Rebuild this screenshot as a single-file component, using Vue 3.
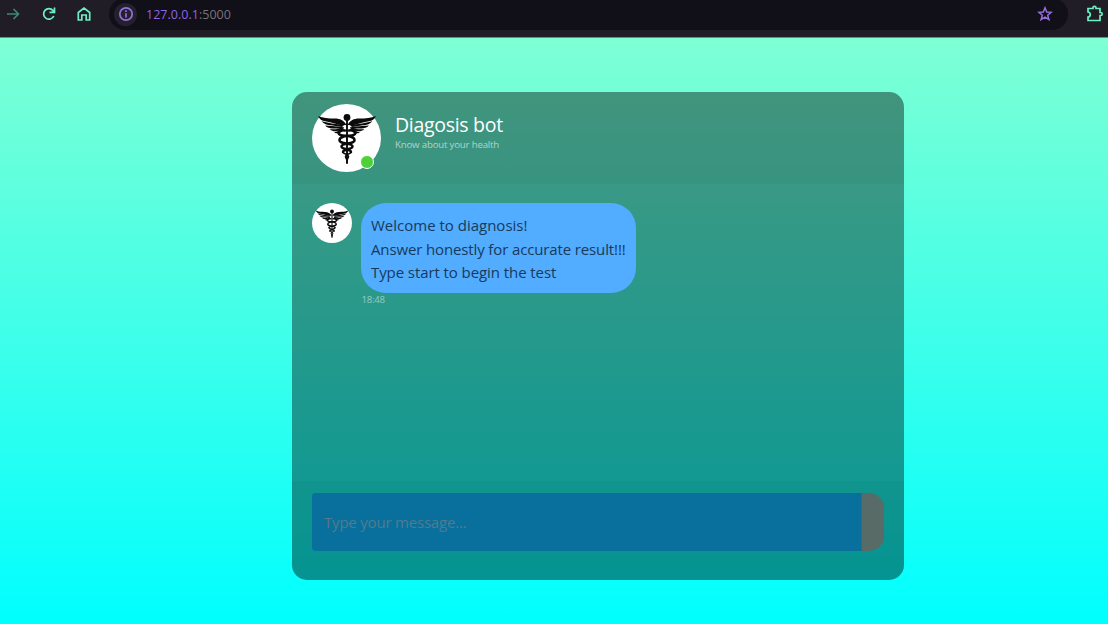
<script setup>
const lines = [
  { text: 'Welcome to diagnosis!', tone: 'plain' },
  { text: 'Answer honestly for accurate result!!!', tone: 'tight' },
  { text: 'Type start to begin the test', tone: 'snug' },
]
</script>

<template>
  <svg class="defs" width="0" height="0" aria-hidden="true">
    <symbol id="caduceus" viewBox="0 0 60 60">
      <g id="wing" fill="#0b0b0b">
        <path d="M29.500 17C27 12.500 23 10.500 18 10.500C11 10.500 6 10 1 8C2.500 11 4.500 12.400 7 13.100L14 14.500L24 17.300Z" />
        <path d="M4.500 13.300C7 16.200 10 17.200 14 17.300L25 19L27 17L15 15.400Z" />
        <path d="M8 17.500C11 20.300 14 20.800 17 20.400L25 20.600L26 19L15 18Z" />
        <path d="M12.500 21.300C15.500 23.600 18 23.600 20 23.100L26 22L27 19L19 21.200Z" />
        <path d="M17 24.400C20 26 23 25.600 26.500 22.800L26 21.500Z" />
      </g>
      <use href="#wing" transform="translate(60 0) scale(-1 1)" />
      <circle cx="30" cy="9.500" r="3.400" fill="#0b0b0b" />
      <path d="M30 12V53" stroke="#0b0b0b" stroke-width="1.900" />
      <g fill="none" stroke="#0b0b0b" stroke-linecap="round">
        <path d="M28 22.500C20.500 21.500 19.500 26.500 25 27.500C31 28 38 28.500 37.500 32.500C37 36.500 24.500 34.500 24.500 38.500C24.500 41.500 34 41 34 44" stroke-width="2.500" />
        <path d="M32 22.500C39.500 21.500 40.500 26.500 35 27.500C29 28 22 28.500 22.500 32.500C23 36.500 35.500 34.500 35.500 38.500C35.500 41.500 26 41 26 44" stroke-width="2.500" />
        <path d="M34 44C34 46 28.500 46 28.500 48.500C28.500 50.500 31 51 30.300 55M26 44C26 46 31.500 46 31.500 48.500C31.500 50.500 29 51 29.700 55" stroke-width="1.600" />
      </g>
    </symbol>
  </svg>

  <div class="window">
    <header class="toolbar">
      <svg class="icon forward" viewBox="0 0 16 16"><path d="M2 8H13M8.500 3L13.500 8L8.500 13" /></svg>
      <svg class="icon reload" viewBox="0 0 16 16"><path d="M12.800 10A5.300 5.300 0 1 1 12 4.500L13 6M13.500 1.500V6.300H8.500" /></svg>
      <svg class="icon home" viewBox="0 0 16 16"><path d="M2.300 14V6.500L8 2L13.700 6.500V14H10.200V9H5.800V14Z" /></svg>
      <div class="address">
        <span class="info">
          <svg class="icon" viewBox="0 0 16 16"><circle cx="8" cy="8" r="6.200" /><path d="M8 7.200V11.500M8 4.300V5.900" /></svg>
        </span>
        <span class="url"><b>127.0.0.1</b>:5000</span>
        <svg class="icon star" viewBox="0 0 16 16"><path d="M8 1.800L9.700 6L14.200 6.300L10.700 9.200L11.900 13.700L8 11.200L4.100 13.700L5.300 9.200L1.800 6.300L6.300 6Z" /></svg>
      </div>
      <svg class="icon puzzle" viewBox="0 0 18 18"><path d="M2 3.500H7V2.800A1.500 1.500 0 0 1 10 2.800V3.500H14V7.500H14.700A1.500 1.500 0 0 1 14.700 10.500H14V15.500H2V12C5 12 5 7 2 7Z" /></svg>
    </header>

    <main class="page">
      <section class="card">
        <div class="card-head">
          <div class="avatar large">
            <svg viewBox="0 0 60 60"><use href="#caduceus" /></svg>
            <span class="online"></span>
          </div>
          <div class="who">
            <h1>Diagosis bot</h1>
            <p>Know about your health</p>
          </div>
        </div>
        <div class="card-body">
          <div class="avatar small"><svg viewBox="0 0 60 60"><use href="#caduceus" /></svg></div>
          <div class="message">
            <div class="bubble"><div v-for="line in lines" :key="line.text" :class="line.tone">{{ line.text }}</div></div>
            <time>18:48</time>
          </div>
        </div>
        <form class="card-foot" @submit.prevent>
          <input type="text" placeholder="Type your message..." />
          <button type="submit" aria-label="Send"></button>
        </form>
      </section>
    </main>
  </div>
</template>

<style>
body { margin: 0; overflow: hidden; }
</style>

<style scoped>
.defs { position: absolute; }
.window { width: 1108px; height: 624px; display: flex; flex-direction: column; font-family: "Open Sans", "Noto Sans", sans-serif; }
.toolbar { height: 38px; flex: none; box-sizing: border-box; background: #201d26; display: flex; align-items: flex-start; border-bottom: 1px solid #549685; overflow: hidden; }
.icon { width: 16px; height: 16px; flex: none; fill: none; stroke: #6cf0c4; stroke-width: 1.7; }
.forward { margin: 6px 0 0 5px; stroke: #3f8672; }
.reload { margin: 6px 0 0 20px; }
.home { margin: 6px 0 0 19px; }
.address { width: 959px; height: 32px; margin: -2px 0 0 17px; flex: none; background: #110f17; border-radius: 16px; display: flex; align-items: center; box-sizing: border-box; padding: 0 15px 0 5px; }
.info { width: 23px; height: 23px; border-radius: 50%; background: #24202d; display: grid; place-items: center; }
.info .icon, .star { stroke: #9370db; }
.url { margin-left: 9px; font-size: 12.500px; color: #77747d; letter-spacing: .02px; }
.url b { font-weight: 400; color: #9065e4; }
.star { margin-left: auto; stroke-width: 1.500; }
.puzzle { width: 18px; height: 18px; margin: 5px 0 0 18px; }
.page { flex: 1; box-sizing: border-box; padding: 53.500px 0 0 292px; background: linear-gradient(to bottom, #7fffd4, #00ffff); }
.card { width: 612px; height: 488px; border-radius: 15px; overflow: hidden; background: rgba(0, 0, 0, .4); display: flex; flex-direction: column; }
.card-head { height: 92px; box-sizing: border-box; padding: 12px 20px; background: rgba(0, 0, 0, .03); display: flex; }
.avatar { position: relative; flex: none; border-radius: 50%; background: #fff; display: grid; place-items: center; }
.large { width: 69px; height: 68px; }
.large svg { width: 60px; height: 60px; }
.small { width: 40px; height: 40px; }
.small svg { width: 34px; height: 34px; }
.online { position: absolute; left: 48px; top: 51px; width: 12px; height: 12px; border: 1.500px solid #fff; border-radius: 50%; background: #4cd137; }
.who { margin: 9px 0 0 14px; }
.who h1 { margin: 0; color: #fff; font-size: 19.500px; line-height: 24px; font-weight: 400; letter-spacing: -.3px; }
.who p { margin: 1px 0 0; color: rgba(255, 255, 255, .6); font-size: 9.700px; line-height: 14px; letter-spacing: -.2px; }
.card-body { flex: 1; padding: 19.600px 20px 0; display: flex; }
.message { margin-left: 9.400px; display: flex; flex-direction: column; align-items: flex-start; }
.bubble { width: 274.600px; height: 90px; box-sizing: border-box; padding: 11px 9.600px; border-radius: 25px; background: #52acff; color: #173a5c; font-size: 15px; line-height: 23.400px; white-space: nowrap; }
.tight { letter-spacing: -.13px; }
.snug { letter-spacing: -.08px; }
time { color: rgba(255, 255, 255, .5); font-size: 9.600px; line-height: 14px; letter-spacing: -.2px; }
.card-foot { height: 98.600px; box-sizing: border-box; padding: 12px 20px 28.600px; background: rgba(0, 0, 0, .03); display: flex; }
.card-foot input { width: 549px; box-sizing: border-box; margin: 0; padding: 0 12px; border: 0; border-radius: 4px 0 0 4px; background: #09709d; font: 15px "Open Sans", sans-serif; letter-spacing: -.2px; outline: 0; }
.card-foot input::placeholder { color: #527b8d; opacity: 1; }
.card-foot button { width: 23px; padding: 0; border: 0; border-left: 1px solid #47617a; border-radius: 0 15px 15px 0; background: #596b66; }
</style>
